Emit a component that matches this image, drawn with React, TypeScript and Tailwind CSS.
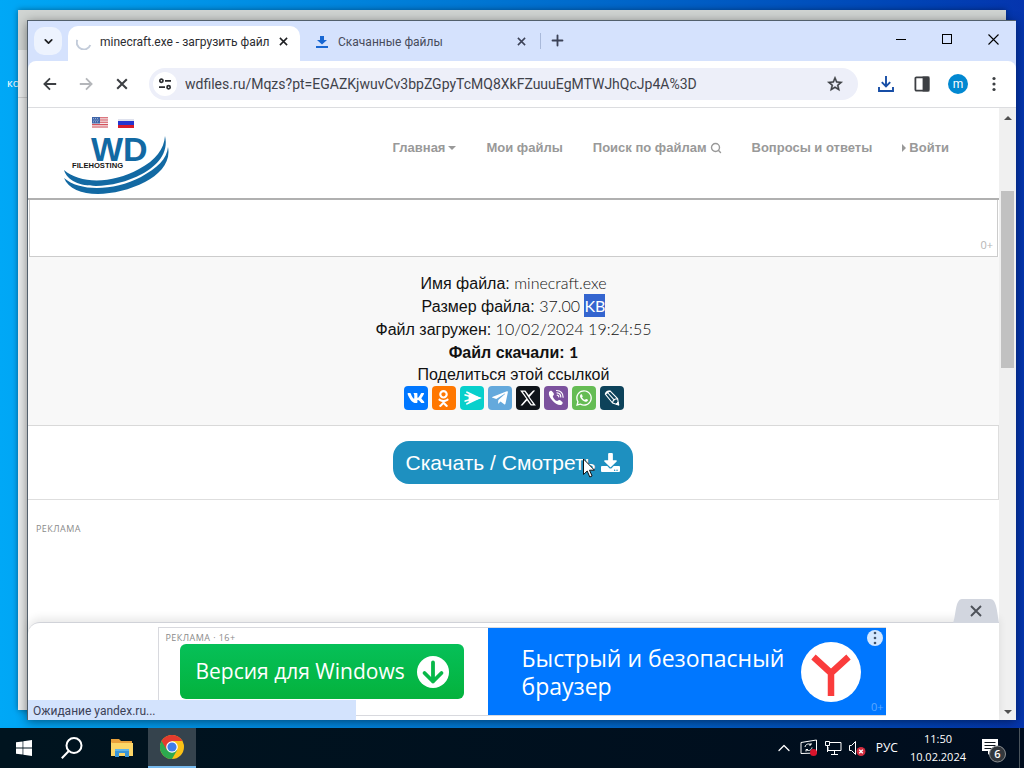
import React from "react";
import { FaVk, FaOdnoklassniki, FaTelegramPlane, FaWhatsapp, FaDownload } from "react-icons/fa";
import { ChevronDown, ChevronUp, Plus, Search } from "lucide-react";

function ArrowLeft({ className = "" }: { className?: string }) {
  return (
    <svg viewBox="0 0 16 16" className={`size-4 ${className}`} fill="none" stroke="currentColor" strokeWidth="1.8">
      <path d="M14.2 8H3M8 2.4 2.4 8 8 13.6" />
    </svg>
  );
}

function SmallCross({ className = "" }: { className?: string }) {
  return (
    <svg viewBox="0 0 10 10" className={className} fill="none" stroke="currentColor" strokeWidth="1.7">
      <path d="m1 1 8 8M9 1 1 9" />
    </svg>
  );
}

function TabStrip() {
  return (
    <div className="flex h-10 shrink-0 items-end bg-[#d5e2fd] font-[Roboto,sans-serif]">
      <button aria-label="Поиск вкладок" className="mb-1.5 ml-1.5 flex size-7 items-center justify-center rounded-[10px] bg-[#edf3fe] text-[#1f2023]">
        <ChevronDown size={13} strokeWidth={3.2} />
      </button>
      <div className="ml-1.5 flex h-[35px] w-[232px] items-center rounded-t-[10px] bg-white pr-3 pb-1 pl-2">
        <svg viewBox="0 0 16 16" className="size-4 shrink-0" fill="none" stroke="#c3ccda" strokeWidth="2">
          <path d="M1.3 5.8A7 7 0 0 0 14.3 11" />
        </svg>
        <span className="ml-2 flex-1 text-xs whitespace-nowrap text-[#2b2c30]">minecraft.exe - загрузить файл</span>
        <button aria-label="Закрыть вкладку" className="text-[#1f2023]"><SmallCross className="size-[9px]" /></button>
      </div>
      <div className="flex h-[35px] w-60 items-center pr-3.5 pb-1 pl-4">
        <svg viewBox="0 0 12 12" className="size-3 shrink-0" fill="#1967d2">
          <path d="M4 0h4v4h3L6 8.6 1 4h3zM0 10h12v2H0z" />
        </svg>
        <span className="ml-2.5 flex-1 text-xs whitespace-nowrap text-[#474c5b]">Скачанные файлы</span>
        <button aria-label="Закрыть вкладку" className="text-[#3c4257]"><SmallCross className="size-[9px]" /></button>
      </div>
      <span className="mb-3 h-4 w-px bg-[#a9b9da]" />
      <button aria-label="Новая вкладка" className="mb-3 ml-2 text-[#3c4257]"><Plus size={17} strokeWidth={2.6} /></button>
      <div className="ml-auto flex h-10 pb-1 text-[#111]">
        <button aria-label="Свернуть" className="flex w-[46px] items-center justify-center">
          <span className="h-px w-2.5 bg-black" />
        </button>
        <button aria-label="Развернуть" className="flex w-[46px] items-center justify-center">
          <span className="size-2.5 border border-black" />
        </button>
        <button aria-label="Закрыть" className="flex w-[46px] items-center justify-center">
          <svg viewBox="0 0 11 11" className="size-[11px]" stroke="#000" strokeWidth="1.1"><path d="m.5.5 10 10m0-10-10 10" /></svg>
        </button>
      </div>
    </div>
  );
}

function Toolbar() {
  return (
    <div className="flex h-[47px] shrink-0 items-center rounded-t-lg border-b border-[#dcdde0] bg-white px-3.5 font-[Roboto,sans-serif] text-[#3c3f43]">
      <button aria-label="Назад"><ArrowLeft /></button>
      <button aria-label="Вперёд" className="ml-5 text-[#b4b6ba]"><ArrowLeft className="rotate-180" /></button>
      <button aria-label="Остановить" className="ml-[22px]"><SmallCross className="size-3" /></button>
      <div className="ml-[21px] flex h-8 flex-1 items-center rounded-full bg-[#edeff9] pr-3.5 pl-1">
        <button aria-label="Сведения о сайте" className="flex size-6 items-center justify-center rounded-full bg-white">
          <svg viewBox="0 0 14 12" className="h-3 w-3.5" fill="none" stroke="#2b2d31" strokeWidth="1.7">
            <circle cx="3.4" cy="2.8" r="1.6" /><path d="M7 2.8h6M1 9.2h6" /><circle cx="10.6" cy="9.2" r="1.6" />
          </svg>
        </button>
        <input
          aria-label="Адресная строка"
          readOnly
          value="wdfiles.ru/Mqzs?pt=EGAZKjwuvCv3bpZGpyTcMQ8XkFZuuuEgMTWJhQcJp4A%3D"
          className="ml-2 min-w-0 flex-1 bg-transparent text-sm text-[#3f424a] outline-none"
        />
        <button aria-label="Добавить в закладки">
          <svg viewBox="0 0 24 24" className="size-[18px]" fill="#3c3f43">
            <path d="m22 9.24-7.19-.62L12 2 9.19 8.63 2 9.24l5.46 4.73L5.82 21 12 17.27 18.18 21l-1.63-7.03zM12 15.4l-3.76 2.27 1-4.28-3.32-2.88 4.38-.38L12 6.1l1.71 4.04 4.38.38-3.32 2.88 1 4.28z" stroke="#3c3f43" strokeWidth=".6" />
          </svg>
        </button>
      </div>
      <button aria-label="Загрузки" className="ml-5">
        <svg viewBox="0 0 16 16" className="size-4" fill="none" stroke="#174ea6" strokeWidth="1.9">
          <path d="M8 0v10M3.8 6.2 8 10.4l4.2-4.2M1 11v4h14v-4" />
        </svg>
      </button>
      <button aria-label="Боковая панель" className="ml-5">
        <svg viewBox="0 0 16 16" className="size-4" fill="none" stroke="#3c3f43" strokeWidth="1.8">
          <rect x="1.4" y="1.4" width="13.2" height="13.2" rx="1" /><path d="M9.5 1.5h5v13h-5z" fill="#3c3f43" />
        </svg>
      </button>
      <button aria-label="Профиль" className="ml-[18px] size-5 rounded-full bg-[#0288d1] text-xs leading-4 text-white">m</button>
      <button aria-label="Меню" className="ml-[18px]">
        <svg viewBox="0 0 16 16" className="size-4" fill="#3c3f43">
          <circle cx="8" cy="2.5" r="1.6" /><circle cx="8" cy="8" r="1.6" /><circle cx="8" cy="13.5" r="1.6" />
        </svg>
      </button>
    </div>
  );
}

function Logo() {
  return (
    <svg viewBox="0 0 110 80" className="h-20 w-[110px]" role="img" aria-label="WD Filehosting">
      <rect x="30" y="2" width="16" height="11" fill="#f4e9ea" />
      <path d="M30 2.8h16M30 5h16M30 7.2h16M30 9.600h16M30 12h16" stroke="#d3525c" strokeWidth="1.1" />
      <rect x="30" y="2" width="8" height="6.500" fill="#3f65a8" />
      <path d="M31 3.600h6M31.600 5.200h5M31 6.800h6" stroke="#c9d6ec" strokeWidth=".7" strokeDasharray="1 1" />
      <rect x="56" y="4" width="16" height="9" fill="#dfe2ee" />
      <rect x="56" y="6" width="16" height="4" fill="#2435cf" />
      <rect x="56" y="10" width="16" height="3" fill="#d81c2a" />
      <text x="29" y="46" fontSize="34" fontWeight="700" fill="#1269a3" fontFamily="Liberation Sans, sans-serif">WD</text>
      <path d="M2 55C18 69 50 69 77 54C94 45 102 34 103 21C107 38 95 51 80 59C50 75 8 76 2 55Z" fill="#1269a3" />
      <path d="M2 63C18 77 52 76 79 62C95 53 105 44 106 32C109 47 98 59 83 67C52 83 10 84 2 63Z" fill="#1269a3" />
      <text x="10" y="53" fontSize="7.600" fontWeight="700" fill="#151515" fontFamily="Liberation Sans, sans-serif">FILEHOSTING</text>
    </svg>
  );
}

function SiteHeader() {
  return (
    <header className="flex h-[92px] shrink-0 items-center border-b-2 border-[#b0b0b0] bg-white pr-[50px] pl-[34px]">
      <a href="#home" className="mt-1"><Logo /></a>
      <nav className="mb-2.5 ml-auto flex items-center gap-[30px] font-['Liberation_Sans',Arial,sans-serif] text-[13px] leading-5 font-bold whitespace-nowrap text-[#999]">
        <a href="#main" className="flex items-center gap-[3px]">Главная<span className="border-x-4 border-t-4 border-x-transparent border-t-[#999]" /></a>
        <a href="#files">Мои файлы</a>
        <a href="#search" className="flex items-center gap-[3px]">Поиск по файлам<Search size={12} strokeWidth={2.8} /></a>
        <a href="#faq">Вопросы и ответы</a>
        <a href="#login" className="flex items-center gap-[3px]"><span className="border-y-4 border-l-4 border-y-transparent border-l-[#999]" />Войти</a>
      </nav>
    </header>
  );
}

const share = [
  { name: "ВКонтакте", bg: "bg-[#0077ff]", icon: <FaVk size={18} /> },
  { name: "Одноклассники", bg: "bg-[#ff7700]", icon: <FaOdnoklassniki size={17} /> },
  {
    name: "Surfingbird",
    bg: "bg-[#07d0cc]",
    icon: (
      <svg viewBox="0 0 24 24" className="size-6" fill="none" stroke="#fff" strokeLinecap="round" strokeWidth="1.8">
        <path d="M7 6.2 19 12 7 17.8M5.2 9 16 12 5.2 15" /><path d="m9.500 9 9.500 3-9.500 3z" fill="#fff" />
      </svg>
    ),
  },
  { name: "Telegram", bg: "bg-[#64a9dc]", icon: <FaTelegramPlane size={18} /> },
  {
    name: "X",
    bg: "bg-[#0f1419]",
    icon: (
      <svg viewBox="0 0 24 24" className="size-[18px]" fill="#fff">
        <path d="M18.9 2h2.600L14 10.500 22.500 22h-6.800l-5-6.700L4.600 22H2l7.700-8.900L1.500 2h7l4.500 6.100zM16.600 20.200h2.300L7.500 3.700H5z" />
      </svg>
    ),
  },
  {
    name: "Viber",
    bg: "bg-[#7b519d]",
    icon: (
      <svg viewBox="0 0 24 24" className="size-6" fill="none" stroke="#fff" strokeLinecap="round">
        <path d="M5 6.300c.8-1.300 2-1.900 3-1 .8.8 1.700 1.900 1.900 2.800.2 1-.9 1.500-1.100 2.300.7 2.200 2.100 3.800 4.300 4.700.9-.1 1.300-1.300 2.300-1 1 .3 2.200 1.200 3 2 .8.9 0 2-1.200 2.800C12.500 20.400 3.500 11.300 5 6.300z" fill="#fff" stroke="none" />
        <path d="M12.500 4.500c4 .2 6.500 2.700 6.600 6.700M13 6.900c2.400.2 3.700 1.600 3.800 4M13.200 9.100c1 .1 1.500.7 1.600 1.700" strokeWidth="1.200" />
      </svg>
    ),
  },
  { name: "WhatsApp", bg: "bg-[#65bc54]", icon: <FaWhatsapp size={18} /> },
  {
    name: "LiveJournal",
    bg: "bg-[#0d425a]",
    icon: (
      <svg viewBox="0 0 24 24" className="size-6" fill="none" stroke="#fff" strokeLinejoin="round">
        <path d="M5.300 8.200 12.500 17l6.200 2-1.100-6.300L10 4.800zM5.300 8.200c.4-2 2-3.400 4.700-3.400M12.500 17c.2-2.600 1.900-4.200 5.100-4.300M8 7l6.500 7.300" strokeWidth="1.100" />
        <path d="m18.700 19-2.600-.9 1.900-2z" fill="#fff" />
      </svg>
    ),
  },
];

function FileInfo() {
  return (
    <section className="shrink-0 border-b border-[#d9d9d9] bg-[#f8f8f8] pt-3.5 pb-[15px] text-center font-['Liberation_Sans',Arial,sans-serif] text-base leading-[23px] text-[#111]">
      <p className="h-[23px]">Имя файла: <span className="font-[Lato] font-light">minecraft.exe</span></p>
      <p className="h-[23px]">Размер файла: <span className="font-[Lato] font-light">37.00</span> <mark className="inline-block bg-[#3465cf] align-top font-[Lato] text-white">KB</mark></p>
      <p className="h-[23px]">Файл загружен: <span className="font-[Lato] font-light">10/02/2024 19:24:55</span></p>
      <p className="h-[23px] font-bold">Файл скачали: <span className="font-[Lato]">1</span></p>
      <p className="h-[23px]">Поделиться этой ссылкой</p>
      <ul className="flex justify-center gap-1">
        {share.map((s) => (
          <li key={s.name}>
            <a href="#share" aria-label={s.name} className={`flex size-6 items-center justify-center rounded text-white ${s.bg}`}>{s.icon}</a>
          </li>
        ))}
      </ul>
    </section>
  );
}

function BottomAd() {
  return (
    <aside className="relative z-10 mt-auto shrink-0 rounded-tl-xl border-t border-[#d0d2d8] bg-white pt-1 pb-1 pl-4 shadow-[0_-4px_9px_rgba(0,0,0,0.09)]">
      <button aria-label="Закрыть рекламу" className="absolute right-0 bottom-full flex h-6 w-[46px] items-center justify-center">
        <svg viewBox="0 0 46 24" className="h-6 w-[46px]">
          <path d="M0 24C3 18 2 0 9 0h28c7 0 7 14 9 24z" fill="#d2d6df" />
          <path d="m18 7 10 10m0-10L18 17" stroke="#4d5159" strokeWidth="1.900" />
        </svg>
      </button>
      <div className="mx-auto flex h-[89px] w-[728px] border border-r-0 border-[#d8d9de]">
        <div className="w-[329px] px-[7px]">
          <p className="pt-1 text-[9px] leading-3 tracking-wider text-[#8a8a8a]">РЕКЛАМА · 16+</p>
          <button className="ml-3.5 flex h-[55px] w-[284px] items-center rounded-md bg-linear-to-b from-[#06c058] to-[#04b23c] pr-[15px] pl-4 text-[21px] font-medium whitespace-nowrap text-white">
            <span className="flex-1 text-left">Версия для Windows</span>
            <svg viewBox="0 0 32 32" className="size-8 shrink-0">
              <circle cx="16" cy="16" r="16" fill="#fff" />
              <path d="M16 6.500v19M7.500 17l8.500 8.500 8.500-8.500" fill="none" stroke="#08b849" strokeWidth="3.800" strokeLinecap="round" strokeLinejoin="round" />
            </svg>
          </button>
        </div>
        <a href="#browser" className="relative flex flex-1 items-center bg-[#0077ff] pr-[25px] pl-[34px] text-white">
          <span className="flex-1 text-[23px] leading-7">Быстрый и безопасный<br />браузер</span>
          <svg viewBox="0 0 60 60" className="size-[60px] shrink-0">
            <circle cx="30" cy="30" r="30" fill="#fff" />
            <path d="m12.500 15 17.500 16 17.500-16M30 30v24" fill="none" stroke="#fa3c3c" strokeWidth="6.500" />
          </svg>
          <span className="absolute top-0.5 right-[3px] flex size-4 items-center justify-center rounded-full bg-[#d4e8ff]">
            <svg viewBox="0 0 4 14" className="h-3.5 w-1" fill="#40536c"><circle cx="2" cy="2" r="1.300" /><circle cx="2" cy="7" r="1.300" /><circle cx="2" cy="12" r="1.300" /></svg>
          </span>
          <span className="absolute right-0.5 bottom-0 text-[11px] leading-4 text-[#5ba8ff]">0+</span>
        </a>
      </div>
    </aside>
  );
}

function Page() {
  return (
    <main className="relative flex min-w-0 flex-1 flex-col bg-white">
      <SiteHeader />
      <div className="mx-px flex h-[57px] shrink-0 items-end justify-end border-x border-b border-[#ccc] pr-1 pb-[3px] text-[11px] text-[#b5b5b5]">0+</div>
      <FileInfo />
      <section className="relative flex shrink-0 justify-center border-r border-b border-[#dedede] py-[15px]">
        <button className="flex h-[43px] items-center gap-1.5 rounded-2xl bg-[#1e90c0] px-[13px] font-['Liberation_Sans',Arial,sans-serif] text-[21px] text-white">
          Скачать / Смотреть <FaDownload size={19} />
        </button>
        <svg viewBox="0 0 12 20" className="absolute top-8 left-1/2 ml-[70px] h-5 w-3">
          <path d="M.5 1v15.500l3.700-3.500 2.600 6 2.300-1-2.600-5.800h5z" fill="#fff" stroke="#111" />
        </svg>
      </section>
      <p className="px-2 pt-[23px] text-[9px] leading-3 tracking-wider text-[#8a8a8a]">РЕКЛАМА</p>
      <BottomAd />
      <div className="absolute bottom-0 left-0 z-20 h-5 w-[328px] bg-[#d3e3fd] pl-[5px] font-[Roboto,sans-serif] text-xs leading-[22px] text-[#3c4257]">Ожидание yandex.ru...</div>
    </main>
  );
}

function Scrollbar() {
  return (
    <div className="flex w-[17px] shrink-0 flex-col items-center bg-[#f0f0f0]">
      <span className="mt-2 border-x-4 border-b-4 border-x-transparent border-b-[#505050]" />
      <span className="mt-[71px] h-[177px] w-[13px] bg-[#c1c1c1]" />
      <span className="mt-auto mb-1.5 border-x-4 border-t-4 border-x-transparent border-t-[#505050]" />
    </div>
  );
}

function Taskbar() {
  return (
    <footer className="flex h-10 shrink-0 items-center bg-linear-to-r from-[#00141f] to-[#000d1e] text-white">
      <button aria-label="Пуск" className="flex h-10 w-12 items-center justify-center">
        <svg viewBox="0 0 16 16" className="size-4" fill="#fff"><path d="M0 2.300 6.600 1.400v6.200H0zM7.300 1.300 16 0v7.600H7.300zM0 8.400h6.600v6.200L0 13.700zM7.300 8.400H16V16l-8.700-1.200z" /></svg>
      </button>
      <button aria-label="Поиск" className="flex h-10 w-12 items-center justify-center">
        <svg viewBox="0 0 22 22" className="size-[22px]" fill="none" stroke="#fff" strokeWidth="2"><circle cx="13" cy="8.500" r="7.500" /><path d="M7.800 14 .8 21.200" /></svg>
      </button>
      <button aria-label="Проводник" className="ml-0.5 flex h-10 w-12 items-center justify-center">
        <svg viewBox="0 0 22 18" className="h-[18px] w-[22px]">
          <path d="M0 0h8l2 2h11v15H0z" fill="#e9a13b" /><path d="M1 4h21v13H0V3z" fill="#fcd667" />
          <path d="M4 10h14v8h-4v-4H8v4H4z" fill="#3a96d8" /><path d="M4 10h14v2H4z" fill="#5fb4e8" />
        </svg>
      </button>
      <button aria-label="Google Chrome" className="ml-0.5 flex h-10 w-12 items-center justify-center border-b-2 border-[#76b9ed] bg-[#35434d]">
        <svg viewBox="0 0 24 24" className="size-6">
          <circle cx="12" cy="12" r="12" fill="#fbc116" />
          <path d="M12 12 1.600 6A12 12 0 0 0 12 24l5.200-9z" fill="#2da94f" />
          <path d="M1.600 6A12 12 0 0 1 22.400 6H12L6.800 15z" fill="#e33b2e" />
          <circle cx="12" cy="12" r="5.800" fill="#fff" /><circle cx="12" cy="12" r="4.600" fill="#3f7de8" />
        </svg>
      </button>
      <div className="ml-auto flex h-10 items-center">
        <button aria-label="Скрытые значки"><ChevronUp size={20} strokeWidth={1.500} /></button>
        <svg viewBox="0 0 18 18" className="ml-1.5 size-[18px]" fill="none" stroke="#fff">
          <path d="M1 3.500 16.500 1v13L1 14.500zM5 8c.5-3 4-4 6-2V4M11 6H9M12 8.500c-.5 3-4 4-6 2v2M6 10.500h2" /><circle cx="13.500" cy="13.500" r="3.500" fill="#d8142c" stroke="none" />
        </svg>
        <svg viewBox="0 0 18 16" className="ml-1.5 h-4 w-[18px]" fill="none" stroke="#fff">
          <path d="M6 2.500h11v8H4V7M10.500 11v3M7 14.500h7M1.500 1.500h4v4h-4zM3.500 6v6" />
        </svg>
        <svg viewBox="0 0 18 16" className="ml-1.5 h-4 w-[18px]" fill="none" stroke="#fff">
          <path d="M1.500 5.500h2l4-4v13l-4-4h-2z" /><circle cx="13" cy="11.500" r="4.500" fill="#d22c3e" stroke="none" /><path d="m11.200 9.700 3.600 3.600m0-3.600-3.600 3.600" strokeWidth="1.300" />
        </svg>
        <span className="ml-2.5 text-xs">РУС</span>
        <div className="ml-3 text-center text-[11px] leading-[18px]"><p>11:50</p><p>10.02.2024</p></div>
        <button aria-label="Уведомления" className="relative ml-[15px] h-10 w-[38px]">
          <svg viewBox="0 0 26 26" className="mt-1.5 size-[26px]">
            <path d="M1 1h16v12H10l-3 4v-4H1z" fill="#fff" /><path d="M3.500 4.500h11M3.500 7.500h11M3.500 10.500h7" stroke="#101820" />
            <circle cx="16.500" cy="16" r="8" fill="#33383d" stroke="#8b8f92" />
            <text x="16.500" y="20" textAnchor="middle" fontSize="11" fontWeight="600" fill="#fff">6</text>
          </svg>
        </button>
        <span className="mr-1 h-10 w-px bg-[#4a545c]" />
      </div>
    </footer>
  );
}

export default function App() {
  return (
    <div className="flex min-h-screen flex-col font-['Open_Sans','Noto_Sans',sans-serif]">
      <div className="relative min-h-[640px] flex-1 overflow-hidden bg-linear-to-r from-[#00a8f6] via-[#0078d4] via-45% to-[#0535ae]">
        <span className="absolute top-[75px] left-[7px] text-[11px] leading-4 text-white">ко</span>
        <div className="absolute top-2.5 right-[18px] bottom-[18px] left-[18px] bg-[#e9ebeb] shadow-[0_0_6px_rgba(0,0,0,0.4)]">
          <div className="h-10 bg-[#d0d4d2]" />
          <div className="h-12 border-b border-[#ccc]" />
        </div>
        <div className="absolute top-5 right-2 bottom-2 left-[27px] flex flex-col border-t border-l border-[#53606c] bg-[#d5e2fd] shadow-[0_2px_10px_rgba(0,0,0,0.45)]">
          <TabStrip />
          <Toolbar />
          <div className="flex flex-1">
            <Page />
            <Scrollbar />
          </div>
        </div>
      </div>
      <Taskbar />
    </div>
  );
}
